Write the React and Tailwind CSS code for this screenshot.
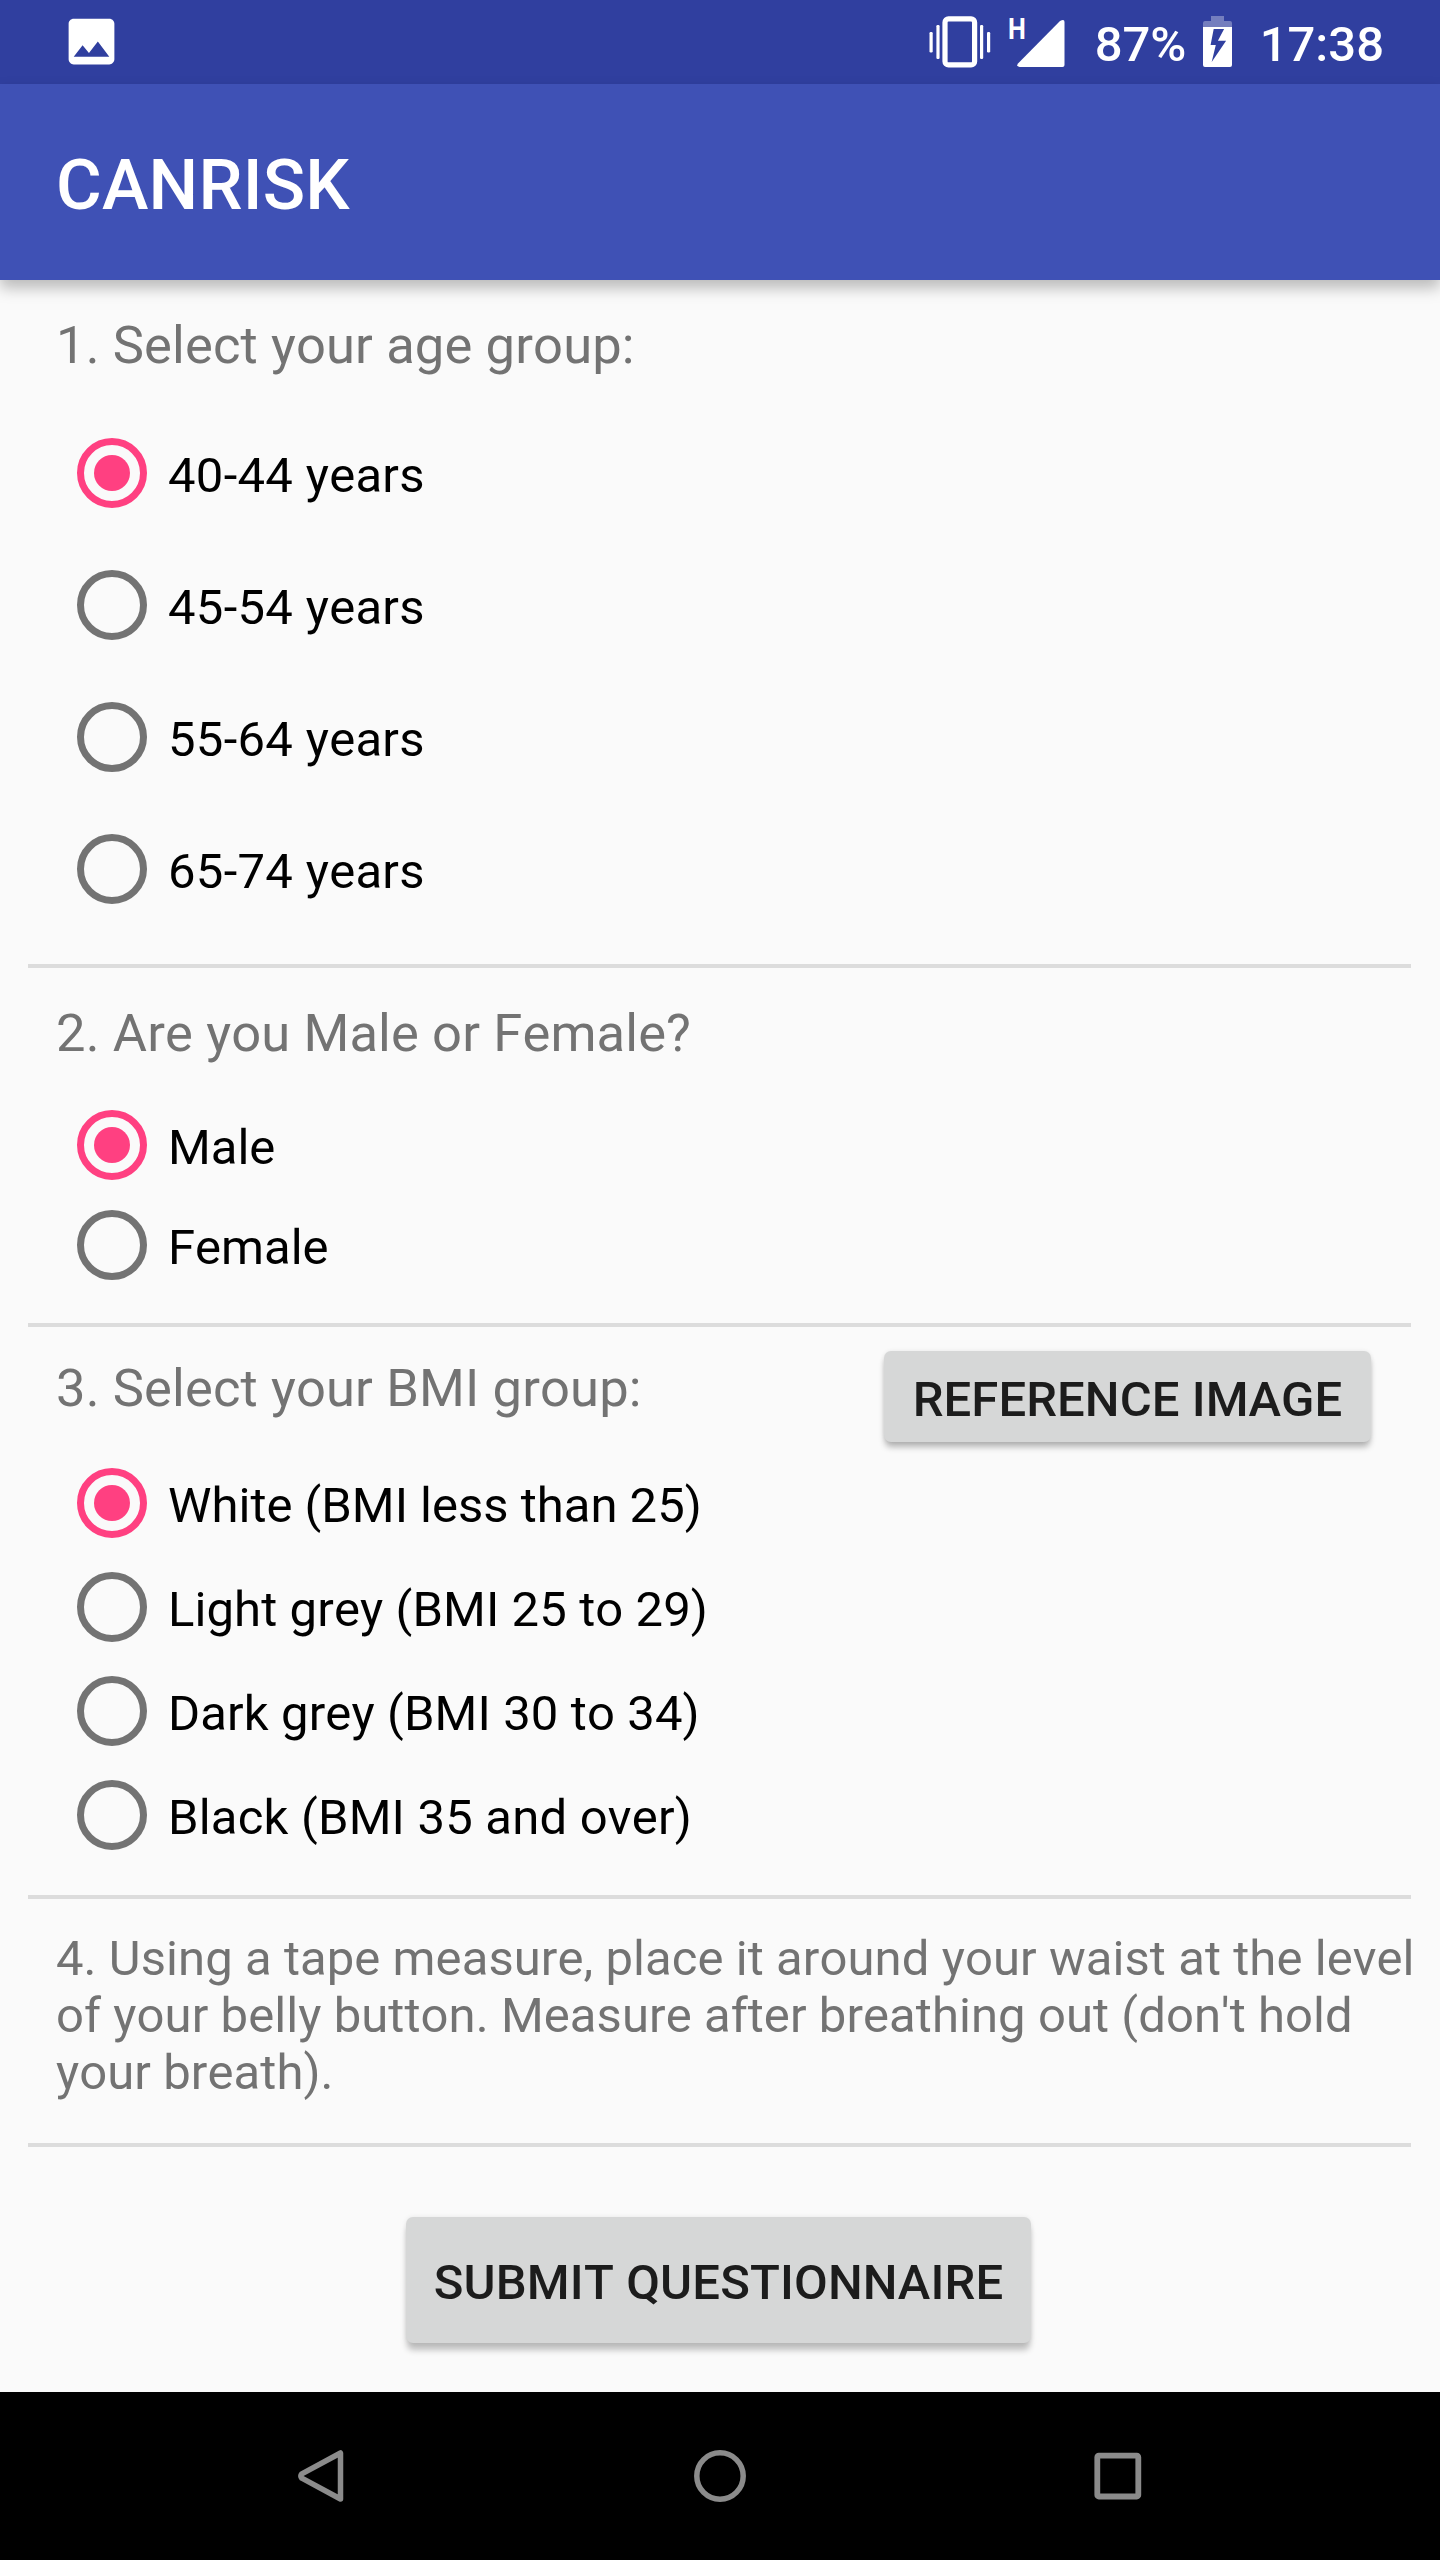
import React, { useState } from "react";

function StatusBar() {
  return (
    <div className="flex h-[84px] items-start bg-[#303f9f] text-white">
      <svg className="ml-[61px] mt-[11px] h-[61px] w-[61px] shrink-0" viewBox="0 0 24 24" fill="currentColor">
        <path d="M21 19V5c0-1.100-.9-2-2-2H5c-1.100 0-2 .9-2 2v14c0 1.100.9 2 2 2h14c1.100 0 2-.9 2-2zM8.500 13.500l2.500 3.010L14.500 12l4.500 6H5l3.500-4.500z" />
      </svg>
      <svg className="ml-auto mt-[14px] h-[56px] w-[62px] shrink-0" viewBox="0 0 62 56" fill="currentColor">
        <rect x="0.500" y="18" width="3.200" height="20.500" rx="1.200" />
        <rect x="7.400" y="11" width="3.200" height="34" rx="1.200" />
        <rect x="51" y="11" width="3.200" height="34" rx="1.200" />
        <rect x="58" y="18" width="3.200" height="20.500" rx="1.200" />
        <rect x="16" y="4.900" width="29.600" height="46" rx="3.500" fill="none" stroke="currentColor" strokeWidth="5.200" />
      </svg>
      <span className="ml-[17px] mt-[14px] inline-block w-[21px] origin-left scale-x-[0.84] text-[30px] font-bold leading-[30px]">H</span>
      <svg className="-ml-[12px] mt-[19px] h-[49px] w-[48px] shrink-0" viewBox="0 0 48 49" fill="currentColor">
        <path d="M1 44.500L43 2Q47.500 -0.500 47.500 3V46Q47.500 48 45.500 48H2.500Q-1 47.500 1 44.500Z" />
      </svg>
      <span className="ml-[30px] mt-[16px] w-[92px] text-[49px] font-medium leading-[57px]">87%</span>
      <svg className="ml-[16px] mt-[16px] h-[51px] w-[29px] shrink-0" viewBox="0 0 29 51" fill="currentColor">
        <path opacity="0.330" d="M8 0h13v5h6q2 0 2 2v4H0V7q0-2 2-2h6z" />
        <path
          fillRule="evenodd"
          d="M0 11h29v38q0 2-2 2H2q-2 0-2-2zM10.700 13L7.600 29H12.800L8.700 46L23.100 24.700H14.900L21.100 13z"
        />
      </svg>
      <span className="ml-[28px] mr-[56px] mt-[16px] text-[49px] font-medium leading-[57px]">17:38</span>
    </div>
  );
}

function Heading({ children }) {
  return <h2 className="whitespace-nowrap text-[52.5px] leading-[64px] tracking-[0.13px] text-[#737373]">{children}</h2>;
}

function Divider() {
  return <div className="ml-[28px] mr-[29px] h-[4px] bg-[#dcdcdc]" />;
}

function Option({ label, tracking = "", checked, onSelect, rowClass }) {
  return (
    <button
      type="button"
      role="radio"
      aria-checked={checked}
      onClick={onSelect}
      className={`flex w-full items-center pl-[77px] text-left ${rowClass}`}
    >
      <span
        className={`flex h-[70px] w-[70px] shrink-0 items-center justify-center rounded-full border-[7px] ${
          checked ? "border-[#ff4081]" : "border-[#737373]"
        }`}
      >
        {checked && <span className="h-[36px] w-[36px] rounded-full bg-[#ff4081]" />}
      </span>
      <span className={`ml-[21px] whitespace-nowrap pt-[4px] text-[49px] leading-[57px] text-black ${tracking}`}>{label}</span>
    </button>
  );
}

function Options({ items, rowClass }) {
  const [selected, setSelected] = useState(0);
  return (
    <div role="radiogroup">
      {items.map((item, i) => (
        <Option key={item.label} {...item} checked={i === selected} onSelect={() => setSelected(i)} rowClass={rowClass} />
      ))}
    </div>
  );
}

const ageGroups = [
  { label: "40-44 years", tracking: "tracking-[0.3px]" },
  { label: "45-54 years", tracking: "tracking-[0.3px]" },
  { label: "55-64 years", tracking: "tracking-[0.3px]" },
  { label: "65-74 years", tracking: "tracking-[0.3px]" },
];

const sexes = [{ label: "Male" }, { label: "Female" }];

const bmiGroups = [
  { label: "White (BMI less than 25)" },
  { label: "Light grey (BMI 25 to 29)", tracking: "tracking-[0.1px]" },
  { label: "Dark grey (BMI 30 to 34)", tracking: "tracking-[0.12px]" },
  { label: "Black (BMI 35 and over)", tracking: "tracking-[0.2px]" },
];

function RaisedButton({ className, children }) {
  return (
    <button
      type="button"
      className={`flex items-center justify-center whitespace-nowrap rounded-[7px] bg-[#d6d7d7] text-[49px] font-medium leading-[57px] text-[#1c1c1c] ${className}`}
    >
      {children}
    </button>
  );
}

function NavBar() {
  return (
    <div className="flex h-[168px] items-center justify-between bg-black pl-[294px] pr-[294px] text-[#8b8b8b]">
      <svg className="h-[56px] w-[56px]" viewBox="0 0 56 56" fill="none" stroke="currentColor" strokeWidth="5.500" strokeLinejoin="round">
        <path d="M46.500 5V51L7.800 30.200Q6 28 7.800 25.800Z" />
      </svg>
      <svg className="h-[56px] w-[56px]" viewBox="0 0 56 56" fill="none" stroke="currentColor" strokeWidth="5.500">
        <circle cx="28" cy="28" r="23.200" />
      </svg>
      <svg className="h-[56px] w-[56px]" viewBox="0 0 56 56" fill="none" stroke="currentColor" strokeWidth="5.800">
        <rect x="7.300" y="7.700" width="41" height="40.800" rx="1.500" />
      </svg>
    </div>
  );
}

export default function App() {
  return (
    <div className="flex h-[2560px] w-[1440px] flex-col overflow-hidden bg-[#fafafa] font-['Roboto',sans-serif] [font-kerning:none]">
      <StatusBar />
      <header className="flex h-[196px] items-center bg-[#3f51b5] pl-[56px] pt-[6px] shadow-[0_8px_14px_rgba(0,0,0,0.26)]">
        <h1 className="text-[70px] font-medium leading-[82px] tracking-[0.2px] text-white">CANRISK</h1>
      </header>

      <section className="h-[684px]">
        <div className="h-[127px] pl-[56px] pt-[33px]">
          <Heading>1. Select your age group:</Heading>
        </div>
        <Options rowClass="h-[132px]" items={ageGroups} />
      </section>
      <Divider />

      <section className="h-[355px]">
        <div className="h-[127px] pl-[56px] pt-[33px]">
          <Heading>2. Are you Male or Female?</Heading>
        </div>
        <Options rowClass="h-[100px]" items={sexes} />
      </section>
      <Divider />

      <section className="h-[568px]">
        <div className="flex h-[124px] items-start justify-between pl-[56px] pr-[69px]">
          <div className="pt-[29px]">
            <Heading>3. Select your BMI group:</Heading>
          </div>
          <RaisedButton className="mt-[24px] h-[91px] w-[487px] pt-[6px] tracking-[0.07px] shadow-[0_6px_6px_-1px_rgba(0,0,0,0.28),0_0_4px_rgba(0,0,0,0.08)]">
            REFERENCE IMAGE
          </RaisedButton>
        </div>
        <Options rowClass="h-[104px]" items={bmiGroups} />
      </section>
      <Divider />

      <section className="h-[244px] pl-[56px] pt-[31px]">
        <p className="whitespace-nowrap text-[49px] leading-[57px] tracking-[0.07px] text-[#737373]">
          4. Using a tape measure, place it around your waist at the level
          <br />
          of your belly button. Measure after breathing out (don't hold
          <br />
          your breath).
        </p>
      </section>
      <Divider />

      <section className="h-[245px] pl-[406px] pt-[70px]">
        <RaisedButton className="h-[126px] w-[625px] pt-[4px] tracking-[0.15px] shadow-[0_8px_6px_-1px_rgba(0,0,0,0.24),0_0_5px_rgba(0,0,0,0.08)]">
          SUBMIT QUESTIONNAIRE
        </RaisedButton>
      </section>

      <NavBar />
    </div>
  );
}
